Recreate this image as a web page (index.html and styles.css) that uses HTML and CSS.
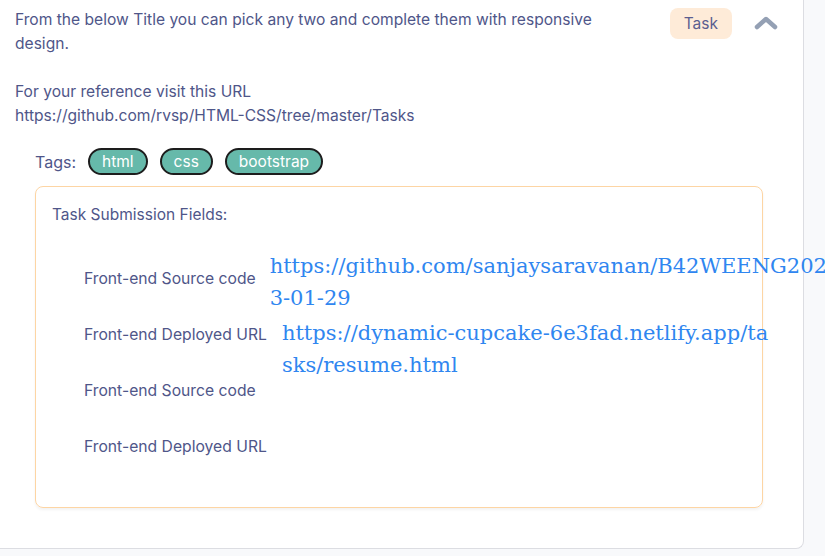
FILE: index.html
```html
<!DOCTYPE html>
<html>
<head>
<meta charset="utf-8">
<link rel="stylesheet" href="styles.css">
</head>
<body>
<div class="card">
  <div class="header">
    <div class="desc">
      <p>From the below Title you can pick any two and complete them with responsive design.</p>
      <p class="gap">For your reference visit this URL<br>https://github.com/rvsp/HTML-CSS/tree/master/Tasks</p>
    </div>
    <div class="actions">
      <span class="badge">Task</span>
      <svg class="chevron" width="24" height="16" viewBox="0 0 24 16"><polyline points="3,12 12,4 21,12" fill="none" stroke="#94a0b4" stroke-width="4.5" stroke-linecap="round" stroke-linejoin="round"/></svg>
    </div>
  </div>
  <div class="tags">
    <span class="tags-label">Tags:</span>
    <span class="tag">html</span>
    <span class="tag">css</span>
    <span class="tag">bootstrap</span>
  </div>
  <div class="box">
    <div class="box-title">Task Submission Fields:</div>
    <div class="fields">
      <div class="row r1">
        <span class="label">Front-end Source code</span>
        <a class="link l1">https://github.com/sanjaysaravanan/B42WEENG2023-01-29</a>
      </div>
      <div class="row r2">
        <span class="label">Front-end Deployed URL</span>
        <a class="link l2">https://dynamic-cupcake-6e3fad.netlify.app/tasks/resume.html</a>
      </div>
      <div class="row r3">
        <span class="label">Front-end Source code</span>
      </div>
      <div class="row r4">
        <span class="label">Front-end Deployed URL</span>
      </div>
    </div>
  </div>
</div>
</body>
</html>
```

FILE: styles.css
```css
html, body {
  margin: 0;
  padding: 0;
  background: #f8f9fb;
  overflow: hidden;
}
body {
  width: 825px;
  height: 556px;
  font-family: "Inter", "Liberation Sans", sans-serif;
  color: #4f5689;
}
.card {
  box-sizing: border-box;
  width: 804px;
  height: 549px;
  background: #fff;
  border-right: 1px solid #dcdde2;
  border-bottom: 1px solid #dcdde2;
  border-bottom-right-radius: 8px;
  padding: 8px 0 0 15px;
}
.header {
  display: flex;
  justify-content: space-between;
  align-items: flex-start;
}
.desc {
  width: 620px;
  font-size: 15.6px;
  line-height: 24px;
}
.desc p {
  margin: 0;
}
.desc p.gap {
  margin-top: 24px;
}
.actions {
  display: flex;
  align-items: center;
  gap: 22px;
  margin-right: 25px;
}
.badge {
  display: inline-block;
  background: #feebd8;
  color: #5a5e90;
  font-size: 15.5px;
  line-height: 31px;
  padding: 0 14px;
  border-radius: 8px;
}
.chevron {
  display: block;
  margin-top: -2px;
}
.tags {
  display: flex;
  align-items: center;
  gap: 12px;
  margin: 20px 0 0 20px;
}
.tags-label {
  font-size: 16px;
  margin-right: 0;
}
.tag {
  box-sizing: border-box;
  height: 27px;
  line-height: 23px;
  padding: 0 12px;
  background: #66b9aa;
  color: #fff;
  border: 2px solid #1d1d1d;
  border-radius: 14px;
  font-size: 15.5px;
}
.box {
  box-sizing: border-box;
  width: 728px;
  height: 322px;
  margin: 11px 0 0 20px;
  border: 1px solid #fdd5a4;
  border-radius: 8px;
  box-shadow: 0 2px 3px rgba(0,0,0,0.05);
  padding: 19px 0 0 16px;
}
.box-title {
  font-size: 15.5px;
  line-height: 18px;
}
.fields {
  padding-left: 32px;
  margin-top: 26px;
}
.row {
  display: flex;
  align-items: center;
  height: 56px;
}
.label {
  font-size: 15.7px;
  white-space: nowrap;
}
.link {
  font-family: "DejaVu Serif", serif;
  font-size: 21px;
  line-height: 32px;
  color: #2f86f0;
  word-break: break-all;
}
.l1 {
  flex: none;
  width: 565px;
  margin-left: 14px;
  margin-top: 7px;
}
.l2 {
  flex: none;
  width: 493px;
  margin-left: 15px;
  margin-top: 30px;
}
```
